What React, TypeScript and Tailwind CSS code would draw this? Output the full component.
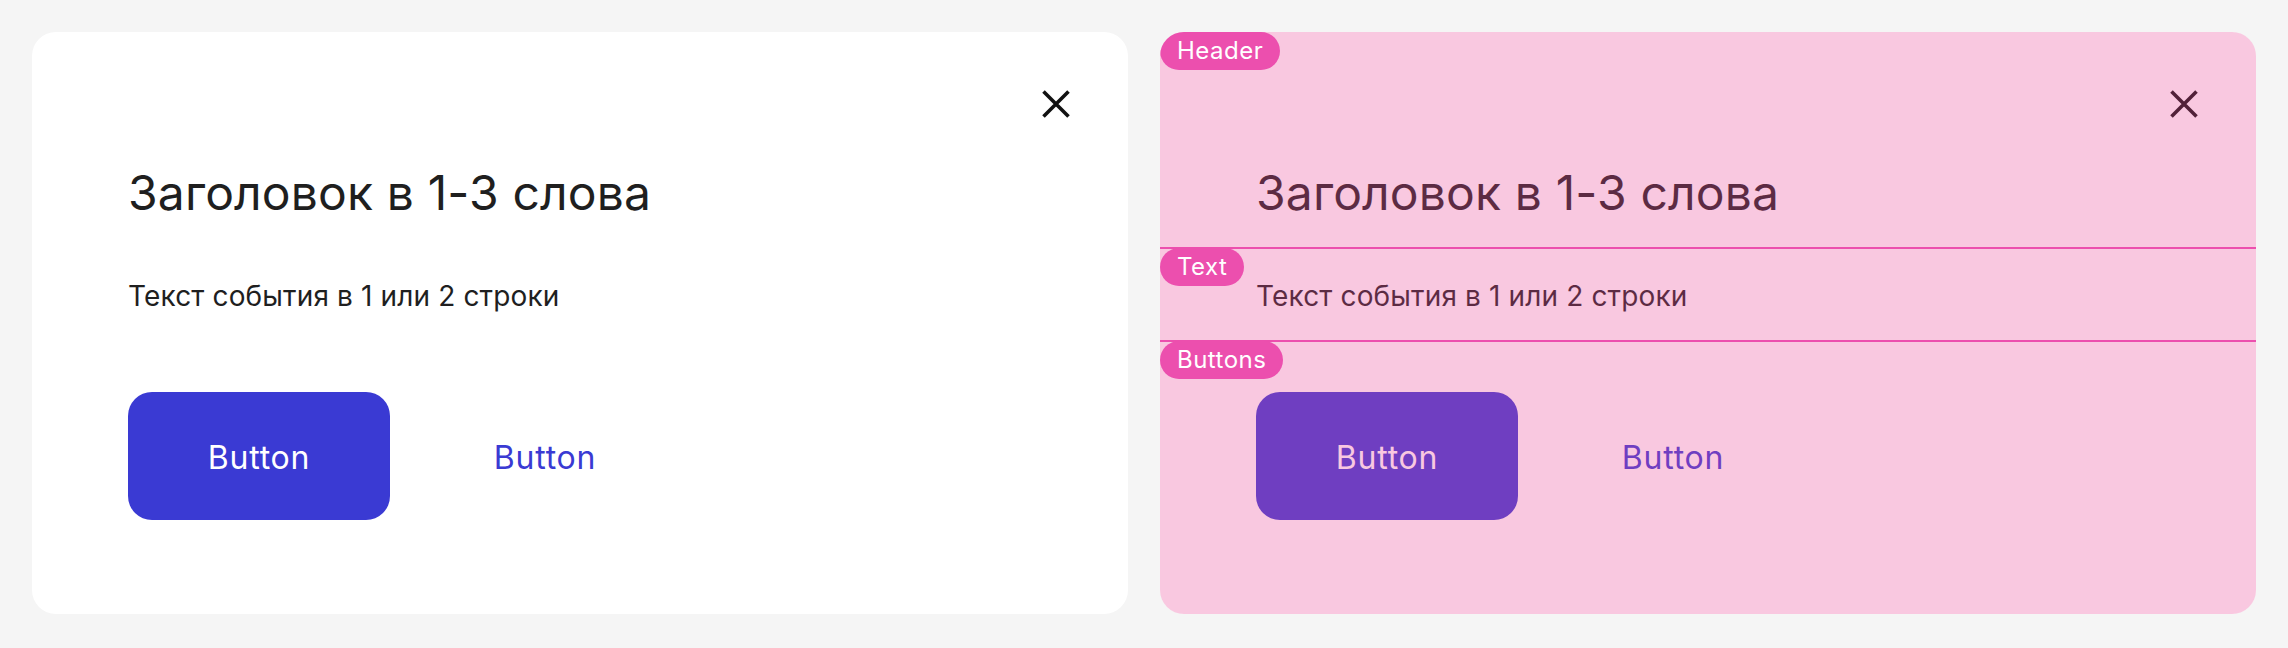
import React from "react";

const font = { fontFamily: "Inter, 'Noto Sans', sans-serif" };

function Badge({ label }: { label: string }) {
  return (
    <div className="absolute left-0 top-0 z-20 flex h-[38px] items-center rounded-full bg-[#ec4fae] px-[17px] text-[24px] leading-none tracking-[0.02em] text-white">
      {label}
    </div>
  );
}

function Line() {
  return <div className="absolute -bottom-[1px] left-0 right-0 z-20 h-[2px] bg-[#ec4fae]" />;
}

function Card({ annotated }: { annotated?: boolean }) {
  return (
    <div className="relative isolate flex h-[582px] w-[1096px] flex-col overflow-hidden rounded-[24px] bg-white">
      <div className="relative flex flex-col pb-[25px] pl-[96px] pr-[48px] pt-[48px]">
        {annotated && <Badge label="Header" />}
        <div className="flex h-[48px] justify-end">
          <button className="flex h-[48px] w-[48px] items-center justify-center text-[#111111]">
            <svg width="48" height="48" viewBox="0 0 48 48" fill="none">
              <path d="M11.5 11.5L36.5 36.5M36.5 11.5L11.5 36.5" stroke="currentColor" strokeWidth="3.6" />
            </svg>
          </button>
        </div>
        <h1 className="mt-[35px] text-[48px] font-normal leading-[60px] tracking-[0.003em] text-[#1f1f1f]">
          Заголовок в 1-3 слова
        </h1>
        {annotated && <Line />}
      </div>
      <div className="relative pb-[25px] pl-[96px] pt-[28px]">
        {annotated && <Badge label="Text" />}
        <p className="text-[28px] leading-[40px] tracking-[0.005em] text-[#1f1f1f]">Текст события в 1 или 2 строки</p>
        {annotated && <Line />}
      </div>
      <div className="relative flex flex-1 gap-[24px] pl-[96px] pt-[51px]">
        {annotated && <Badge label="Buttons" />}
        <button className="flex h-[128px] w-[262px] items-center justify-center rounded-[24px] bg-[#3a3ad3] pt-[4px] text-[32px] tracking-[0.025em] text-white">
          Button
        </button>
        <button className="flex h-[128px] w-[262px] items-center justify-center rounded-[24px] pt-[4px] text-[32px] tracking-[0.025em] text-[#3a3ad3]">
          Button
        </button>
      </div>
      {annotated && (
        <div className="pointer-events-none absolute inset-0 z-10 bg-[#ec4899]/30" />
      )}
    </div>
  );
}

export default function App() {
  return (
    <div className="flex h-[648px] w-[2288px] gap-[32px] bg-[#f5f5f5] p-[32px]" style={font}>
      <Card />
      <Card annotated />
    </div>
  );
}
